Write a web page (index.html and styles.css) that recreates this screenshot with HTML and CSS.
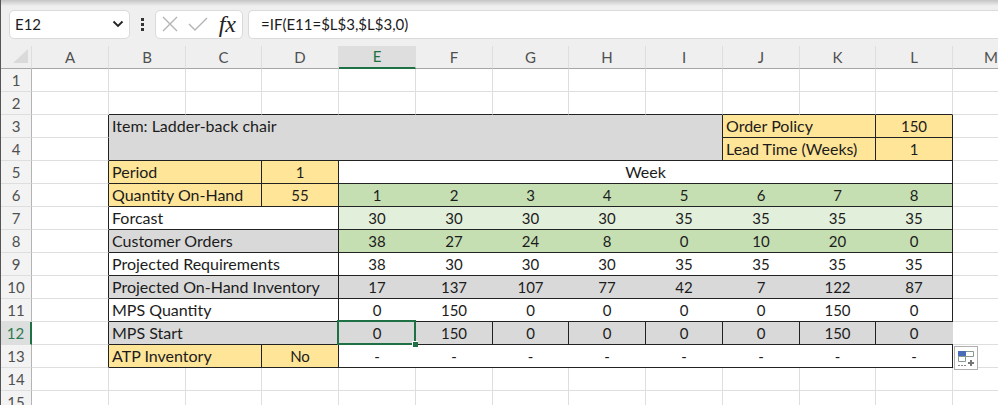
FILE: index.html
```html
<!DOCTYPE html>
<html lang="en">
<head>
  <meta charset="UTF-8" />
  <meta name="viewport" content="width=device-width, initial-scale=1.0" />
  <title>Master Production Schedule</title>
  <link rel="stylesheet" href="styles.css">
</head>
<body>
  <header class="formula-bar">
    <div class="name-box">
      <input type="text" value="E12" aria-label="Name box">
      <button type="button" aria-label="Show names">
        <svg width="12" height="8" viewBox="0 0 12 8"><path d="M1.5 1.5 L6 6 L10.5 1.5" fill="none" stroke="#222" stroke-width="1.8"/></svg>
      </button>
    </div>
    <svg class="dots" width="4" height="14" viewBox="0 0 4 14" fill="#333"><path d="M0 1h3v3H0zM0 6h3v3H0zM0 11h3v3H0z"/></svg>
    <div class="tools">
      <button type="button" aria-label="Cancel">
        <svg width="16" height="16" viewBox="0 0 16 16"><path d="M1 1 L15 15 M15 1 L1 15" fill="none" stroke="#b4b4b4" stroke-width="1.4"/></svg>
      </button>
      <button type="button" aria-label="Enter">
        <svg width="20" height="14" viewBox="0 0 20 14"><path d="M1 7 L7 13 L19 1" fill="none" stroke="#b4b4b4" stroke-width="1.4"/></svg>
      </button>
      <button type="button" class="fx" aria-label="Insert function">fx</button>
    </div>
    <input type="text" class="formula" value="=IF(E11=$L$3,$L$3,0)" aria-label="Formula">
  </header>

  <main class="sheet">
    <table>
      <colgroup>
        <col class="rows">
        <col><col><col class="narrow"><col>
        <col><col><col class="narrow"><col>
        <col><col><col class="narrow"><col>
        <col>
      </colgroup>
      <thead>
        <tr>
          <th class="corner"><svg width="16" height="16" viewBox="0 0 16 16"><path d="M16 0v14H1z" fill="#dadada"/></svg></th>
          <th>A</th><th>B</th><th>C</th><th>D</th><th class="active">E</th><th>F</th><th>G</th>
          <th>H</th><th>I</th><th>J</th><th>K</th><th>L</th><th>M</th>
        </tr>
      </thead>
      <tbody>
        <tr>
          <th>1</th>
          <td></td><td></td><td></td><td></td><td></td><td></td><td></td><td></td><td></td><td></td><td></td><td></td><td></td>
        </tr>
        <tr class="above">
          <th>2</th>
          <td class="out"></td><td></td><td></td><td></td><td></td><td></td><td></td><td></td><td></td><td></td><td></td><td></td><td class="out"></td>
        </tr>
        <tr>
          <th>3</th>
          <td class="side"></td>
          <td class="box label gray item" colspan="8" rowspan="2">Item: Ladder-back chair</td>
          <td class="box label gold" colspan="2">Order Policy</td>
          <td class="box gold">150</td>
          <td></td>
        </tr>
        <tr>
          <th>4</th>
          <td class="side"></td>
          <td class="box label gold" colspan="2">Lead Time (Weeks)</td>
          <td class="box gold">1</td>
          <td></td>
        </tr>
        <tr>
          <th>5</th>
          <td class="side"></td>
          <td class="box label gold" colspan="2">Period</td>
          <td class="box gold">1</td>
          <td class="box week" colspan="8">Week</td>
          <td></td>
        </tr>
        <tr class="data green">
          <th>6</th>
          <td class="side"></td>
          <td class="box label gold" colspan="2">Quantity On-Hand</td>
          <td class="box gold">55</td>
          <td>1</td><td>2</td><td>3</td><td>4</td><td>5</td><td>6</td><td>7</td><td class="box">8</td>
          <td class="out"></td>
        </tr>
        <tr class="data mint">
          <th>7</th>
          <td class="side"></td>
          <td class="box label white" colspan="3">Forcast</td>
          <td>30</td><td>30</td><td>30</td><td>30</td><td>35</td><td>35</td><td>35</td><td class="box">35</td>
          <td class="out"></td>
        </tr>
        <tr class="data green">
          <th>8</th>
          <td class="side"></td>
          <td class="box label gray" colspan="3">Customer Orders</td>
          <td>38</td><td>27</td><td>24</td><td>8</td><td>0</td><td>10</td><td>20</td><td class="box">0</td>
          <td class="out"></td>
        </tr>
        <tr class="data">
          <th>9</th>
          <td class="side"></td>
          <td class="box label" colspan="3">Projected Requirements</td>
          <td>38</td><td>30</td><td>30</td><td>30</td><td>35</td><td>35</td><td>35</td><td class="box">35</td>
          <td class="out"></td>
        </tr>
        <tr class="data shade">
          <th>10</th>
          <td class="side"></td>
          <td class="box label" colspan="3">Projected On-Hand Inventory</td>
          <td>17</td><td>137</td><td>107</td><td>77</td><td>42</td><td>7</td><td>122</td><td class="box">87</td>
          <td class="out"></td>
        </tr>
        <tr class="data">
          <th>11</th>
          <td class="side"></td>
          <td class="box label" colspan="3">MPS Quantity</td>
          <td>0</td><td>150</td><td>0</td><td>0</td><td>0</td><td>0</td><td>150</td><td class="box">0</td>
          <td class="out"></td>
        </tr>
        <tr class="data shade">
          <th class="active">12</th>
          <td class="side"></td>
          <td class="box label" colspan="3">MPS Start</td>
          <td class="selected">0</td><td class="box">150</td><td class="box">0</td><td class="box">0</td><td class="box">0</td><td class="box">0</td><td class="box">150</td><td>0</td>
          <td class="out"></td>
        </tr>
        <tr class="data">
          <th>13</th>
          <td class="side"></td>
          <td class="box label gold" colspan="2">ATP Inventory</td>
          <td class="box gold">No</td>
          <td>-</td><td>-</td><td>-</td><td>-</td><td>-</td><td>-</td><td>-</td><td class="box">-</td>
          <td class="out fill-cell">
            <button type="button" class="fill-options" aria-label="Auto fill options">
              <svg width="18" height="18" viewBox="0 0 18 18">
                <path d="M1.5 2.5h15v5h-15z" fill="#fff" stroke="#8b988f"/>
                <path d="M1.5 7.5h7v5h-7z" fill="#fff" stroke="#8b988f"/>
                <path d="M1 2h8v5H1z" fill="#4a6cb8"/>
                <path d="M1 16.5h9" stroke="#888" stroke-dasharray="2 1"/>
                <path d="M14 11v6M11 14h6" stroke="#777" stroke-width="2"/>
              </svg>
            </button>
          </td>
        </tr>
        <tr>
          <th>14</th>
          <td></td><td></td><td></td><td></td><td></td><td></td><td></td><td></td><td></td><td></td><td></td><td></td><td></td>
        </tr>
        <tr>
          <th>15</th>
          <td></td><td></td><td></td><td></td><td></td><td></td><td></td><td></td><td></td><td></td><td></td><td></td><td></td>
        </tr>
      </tbody>
    </table>
  </main>
</body>
</html>
```

FILE: styles.css
```css
* {
  box-sizing: border-box;
}

body {
  margin: 0;
  height: 100vh;
  overflow: hidden;
  border-left: 1px solid #555;
  background: #efefef;
  font-family: Lato, "Open Sans", sans-serif;
  font-size: 15px;
  color: #1c1c1c;
}

button,
input {
  border: none;
  padding: 0;
  background: none;
  font: inherit;
  color: inherit;
  outline: none;
}

button {
  display: flex;
  align-items: center;
  justify-content: center;
}

/* formula bar */
.formula-bar {
  display: flex;
  align-items: center;
  height: 46px;
  padding: 2px 0 0 8px;
  background: linear-gradient(#c4c4c4, #efefef 6px);
}

.name-box,
.tools,
.formula {
  height: 29px;
  background: #fff;
  border: 1px solid #dadada;
  border-radius: 5px;
}

.name-box {
  display: flex;
  width: 121px;
  padding: 0 5px;
}

.name-box input {
  flex: 1;
  min-width: 0;
}

.name-box button {
  width: 12px;
}

.dots {
  margin: 0 10px 0 11px;
}

.tools {
  display: flex;
  align-items: center;
  justify-content: space-between;
  width: 88px;
  margin-right: 5px;
  padding: 0 6px;
}

.fx {
  font-family: "Liberation Serif", serif;
  font-size: 24px;
  font-style: italic;
  line-height: 24px;
  color: #222;
}

.formula {
  flex: 1;
  min-width: 0;
  padding: 0 12px;
  border-right: none;
  border-radius: 5px 0 0 5px;
}

/* grid */
.sheet {
  overflow: hidden;
}

table {
  width: 1029px;
  table-layout: fixed;
  border-collapse: separate;
  border-spacing: 0;
  background: #fff;
}

col {
  width: 77px;
}

col.narrow {
  width: 76px;
}

col.rows {
  width: 31px;
}

th,
td {
  height: 23px;
  padding: 0;
  border: solid #dedede;
  border-width: 0 1px 1px 0;
  line-height: 22px;
  text-align: center;
  white-space: nowrap;
}

th {
  background: #f3f3f3;
  font-weight: normal;
  color: #505050;
}

thead th {
  background: #efefef;
  border-bottom-color: #a6a6a6;
}

tbody th {
  border-right-color: #b4b4b4;
}

.corner svg {
  display: block;
  margin-left: 11px;
}

thead th.active {
  background: #dedede;
  border-bottom: 2px solid #1e7145;
  line-height: 21px;
  color: #1e7145;
}

tbody th.active {
  background: #dcdfdd;
  border-right: 2px solid #1e7145;
  color: #2f7a52;
}

/* schedule */
.box {
  border-color: #222;
}

.label {
  padding-left: 3px;
  font-size: 16px;
  text-align: left;
}

.week {
  font-size: 16px;
}

.item {
  vertical-align: top;
}

.side {
  border-right-color: #222;
}

.above td:not(.out) {
  border-bottom-color: #222;
}

.data td:not(.side):not(.out) {
  border-bottom-color: #222;
}

.data td:not(.side):not(.out):not(.box) {
  border-right: none;
  padding-right: 1px;
}

.green td:not(.side):not(.out) {
  background: #c5dfb3;
}

.mint td:not(.side):not(.out) {
  background: #e2efda;
}

.shade td:not(.side):not(.out),
.data td.gray.label,
.gray {
  background: #d9d9d9;
}

.green td.gray.label:not(.side):not(.out) {
  background: #d9d9d9;
}

.data td.gold.box:not(.out),
.gold {
  background: #ffe598;
}

.mint td.white.label:not(.out) {
  background: #fff;
}

.selected {
  position: relative;
}

.selected::before {
  content: "";
  position: absolute;
  inset: -2px 0 -1px -2px;
  border: 2px solid #1e7145;
}

.selected::after {
  content: "";
  position: absolute;
  right: -2px;
  bottom: -3px;
  width: 5px;
  height: 5px;
  border: solid #fff;
  border-width: 1px 0 0 1px;
  background: #1e7145;
}

.fill-cell {
  position: relative;
}

.fill-options {
  position: absolute;
  top: 1px;
  left: 1px;
  width: 24px;
  height: 24px;
  background: #fff;
  border: 1px solid #b0b0b0;
}
```
